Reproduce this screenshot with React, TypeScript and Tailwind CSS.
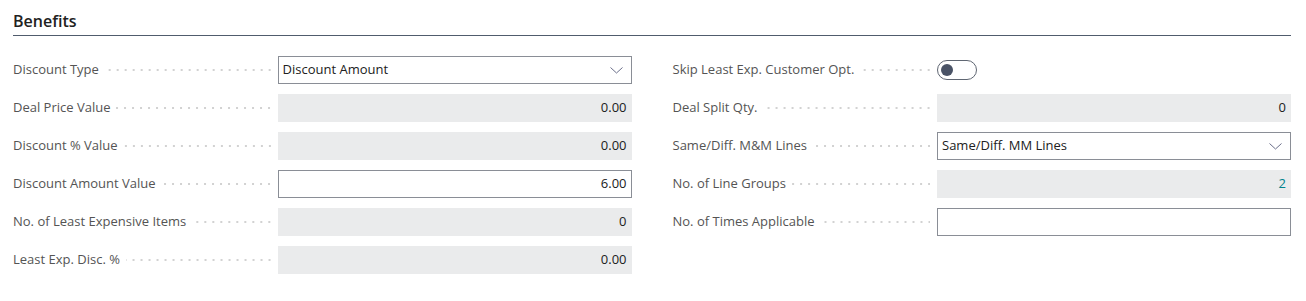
import React from 'react';

type Field =
  | { label: string; kind: 'select'; value: string }
  | { label: string; kind: 'readonly'; value: string; accent?: boolean }
  | { label: string; kind: 'input'; value: string }
  | { label: string; kind: 'toggle' };

const LEFT: Field[] = [
  { label: 'Discount Type', kind: 'select', value: 'Discount Amount' },
  { label: 'Deal Price Value', kind: 'readonly', value: '0.00' },
  { label: 'Discount % Value', kind: 'readonly', value: '0.00' },
  { label: 'Discount Amount Value', kind: 'input', value: '6.00' },
  { label: 'No. of Least Expensive Items', kind: 'readonly', value: '0' },
  { label: 'Least Exp. Disc. %', kind: 'readonly', value: '0.00' },
];

const RIGHT: Field[] = [
  { label: 'Skip Least Exp. Customer Opt.', kind: 'toggle' },
  { label: 'Deal Split Qty.', kind: 'readonly', value: '0' },
  { label: 'Same/Diff. M&M Lines', kind: 'select', value: 'Same/Diff. MM Lines' },
  { label: 'No. of Line Groups', kind: 'readonly', value: '2', accent: true },
  { label: 'No. of Times Applicable', kind: 'input', value: '' },
];

function Chevron() {
  return (
    <svg width="13" height="7" viewBox="0 0 13 7" fill="none" className="shrink-0">
      <path d="M0.5 0.5 L6.5 6 L12.5 0.5" stroke="#6b6f8a" strokeWidth="1" />
    </svg>
  );
}

function Control({ field }: { field: Field }) {
  if (field.kind === 'toggle') {
    return (
      <div className="w-[354px] h-[28px] flex items-center">
        <div className="w-[40px] h-[20px] rounded-full border border-[#5f6672] flex items-center px-[3px]">
          <div className="w-[12px] h-[12px] rounded-full bg-[#4a5366]" />
        </div>
      </div>
    );
  }
  if (field.kind === 'select') {
    return (
      <div className="w-[354px] h-[28px] border border-[#8a8e96] bg-white flex items-center justify-between pl-[4px] pr-[8px] text-[#212121]">
        <span>{field.value}</span>
        <Chevron />
      </div>
    );
  }
  if (field.kind === 'input') {
    return (
      <div className="w-[354px] h-[28px] border border-[#8a8e96] bg-white flex items-center justify-end px-[4px] text-[#212121]">
        {field.value}
      </div>
    );
  }
  return (
    <div
      className={`w-[354px] h-[28px] bg-[#eaebec] flex items-center justify-end px-[5px] ${
        field.accent ? 'text-[#00838c]' : 'text-[#212121]'
      }`}
    >
      {field.value}
    </div>
  );
}

function Row({ field }: { field: Field }) {
  return (
    <div className="flex items-center h-[38px]">
      <div className="flex-1 flex items-center min-w-0">
        <span className="text-[#545454] whitespace-nowrap">{field.label}</span>
        <div className="flex-1 h-[2px] ml-[6px] mr-[7px] bg-[linear-gradient(to_left,#d2d2d2_2px,transparent_2px)] bg-[length:8px_2px] bg-right bg-repeat-x" />
      </div>
      <Control field={field} />
    </div>
  );
}

export default function App() {
  return (
    <div className="w-[1306px] h-[301px] bg-white font-['Segoe_UI','Open_Sans','Liberation_Sans',sans-serif] text-[13px]">
      <div className="px-[13px] pt-[10px]">
        <h2 className="text-[16px] font-semibold text-[#212121] leading-[22px] pb-[3px] border-b border-[#505c6d] mr-[2px]">
          Benefits
        </h2>
        <div className="grid grid-cols-2 gap-x-[41px] pt-[15px] pr-[2px]">
          <div className="flex flex-col">
            {LEFT.map(f => (
              <Row key={f.label} field={f} />
            ))}
          </div>
          <div className="flex flex-col">
            {RIGHT.map(f => (
              <Row key={f.label} field={f} />
            ))}
          </div>
        </div>
      </div>
    </div>
  );
}
